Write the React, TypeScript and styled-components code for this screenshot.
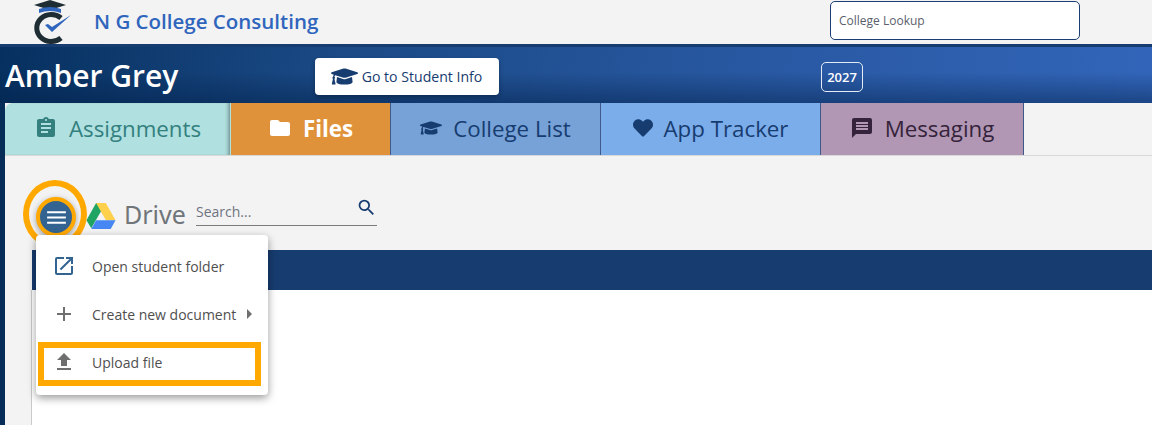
import * as React from 'react';
import styled, { createGlobalStyle } from 'styled-components';
import { FaGraduationCap, FaHeart } from 'react-icons/fa';
import {
  MdAdd,
  MdArrowRight,
  MdAssignment,
  MdFileUpload,
  MdFolder,
  MdMenu,
  MdMessage,
  MdOpenInNew,
  MdSearch,
} from 'react-icons/md';

const GlobalStyle = createGlobalStyle`
  html, body {
    margin: 0;
    padding: 0;
    height: 100%;
    overflow: hidden;
    background: #f3f3f3;
    font-family: "Open Sans", "Liberation Sans", sans-serif;
  }
  * { box-sizing: border-box; }
`;

const Page = styled.div`
  width: 1152px;
  height: 425px;
  display: flex;
  flex-direction: column;
  overflow: hidden;
`;

const TopBar = styled.div`
  height: 44px;
  flex: none;
  display: flex;
  align-items: flex-start;
  padding-left: 31px;
  background: #f3f3f3;
`;

const Brand = styled.div`
  margin: 8px 0 0 21px;
  width: 736px;
  font-size: 20.5px;
  line-height: 27px;
  font-weight: 600;
  color: #2f65bd;
`;

const Lookup = styled.div`
  width: 250px;
  height: 39px;
  margin-top: 1px;
  padding-left: 8px;
  display: flex;
  align-items: center;
  font-size: 12px;
  color: #5a5f6b;
  background: #fff;
  border: 1px solid #1b3d72;
  border-radius: 5px;
`;

const Header = styled.div`
  height: 59px;
  flex: none;
  display: flex;
  align-items: flex-start;
  padding-left: 5px;
  border-top: 3px solid #173c70;
  background: linear-gradient(to bottom, rgba(0, 30, 70, 0) 45%, rgba(0, 30, 70, 0.45) 100%),
    linear-gradient(100deg, #06305f 0%, #1b4a86 30%, #2a5aa5 70%, #3265b9 100%);
`;

const StudentName = styled.h1`
  margin: 9px 0 0;
  width: 310px;
  font-size: 30px;
  line-height: 40px;
  font-weight: 600;
  color: #fff;
`;

const InfoButton = styled.div`
  width: 184px;
  height: 37px;
  margin-top: 11px;
  display: flex;
  align-items: center;
  justify-content: center;
  gap: 4px;
  font-size: 14.1px;
  color: #173c70;
  background: #fff;
  border-radius: 4px;
  box-shadow: 0 2px 4px rgba(0, 0, 0, 0.3);
  svg { font-size: 27px; margin-left: -1px; }
`;

const YearBadge = styled.div`
  width: 42px;
  height: 30px;
  margin: 15px 0 0 322px;
  display: flex;
  align-items: center;
  justify-content: center;
  font-size: 13px;
  font-weight: 600;
  color: #fff;
  border: 1px solid #e4ebf5;
  border-radius: 5px;
`;

const Body = styled.div`
  flex: 1;
  display: flex;
  min-height: 0;
`;

const Rail = styled.div`
  width: 5px;
  flex: none;
  background: #052d58;
`;

const Content = styled.div`
  flex: 1;
  min-width: 0;
  display: flex;
  flex-direction: column;
`;

const Tabs = styled.div`
  height: 53px;
  flex: none;
  display: flex;
  border-bottom: 1px solid #d8d8d8;
  background: #f3f3f3;
`;

const Tab = styled.div<{ $w: number; $bg: string; $fg: string; $icon?: number; $first?: boolean; $bold?: boolean }>`
  width: ${p => p.$w}px;
  height: 52px;
  display: flex;
  align-items: center;
  justify-content: center;
  gap: 11px;
  padding-bottom: 2px;
  background: ${p => p.$bg};
  color: ${p => p.$fg};
  font-size: 22.3px;
  font-weight: ${p => (p.$bold ? 700 : 400)};
  border-right: 1px solid ${p => (p.$first ? 'transparent' : '#3f5a8a')};
  border-top-left-radius: ${p => (p.$first ? '8px' : '0')};
  box-shadow: ${p => (p.$first ? 'inset -4px 0 4px -3px rgba(0, 0, 0, 0.45)' : 'none')};
  svg { font-size: ${p => p.$icon ?? 24}px; flex: none; }
`;

const Panel = styled.div`
  flex: 1;
  min-height: 0;
  display: flex;
  flex-direction: column;
  position: relative;
`;

const Toolbar = styled.div`
  height: 94px;
  flex: none;
  display: flex;
  align-items: flex-start;
  padding: 44px 0 0 31px;
`;

const MenuButton = styled.div`
  position: relative;
  width: 40px;
  height: 40px;
  flex: none;
  margin-top: -3px;
  display: flex;
  align-items: center;
  justify-content: center;
  color: #fff;
  background: #336491;
  border: 4px solid #ffa800;
  border-radius: 50%;
  box-shadow: 0 2px 6px rgba(0, 0, 0, 0.35);
  svg { font-size: 25px; }
`;

const Ring = styled.div`
  position: absolute;
  left: -17px;
  top: -21px;
  width: 64px;
  height: 68px;
  border: 6px solid #ffa800;
  border-radius: 50%;
`;

const DriveMark = styled.svg`
  width: 30px;
  height: 26px;
  flex: none;
  margin: 3px 0 0 10px;
`;

const DriveWord = styled.div`
  margin: -3px 0 0 8px;
  width: 72px;
  font-family: "Noto Sans", "Open Sans", sans-serif;
  font-size: 25px;
  line-height: 34px;
  color: #70757a;
`;

const SearchBox = styled.div`
  width: 181px;
  height: 29px;
  margin-top: -3px;
  display: flex;
  align-items: center;
  justify-content: space-between;
  font-size: 14px;
  color: #6f7480;
  border-bottom: 1px solid #7b7b7b;
  span { margin-top: 1px; }
  svg { font-size: 21px; color: #173c70; margin-top: -8px; }
`;

const BlueBar = styled.div`
  height: 40px;
  flex: none;
  margin-left: 27px;
  background: #173c70;
`;

const Sheet = styled.div`
  flex: 1;
  margin-left: 26px;
  background: #fff;
  border-left: 1px solid #c9c9c9;
`;

const Menu = styled.div`
  position: absolute;
  left: 31px;
  top: 79px;
  width: 232px;
  height: 160px;
  padding-top: 7px;
  background: #fff;
  border-radius: 4px;
  box-shadow: 0 3px 8px rgba(0, 0, 0, 0.4);
`;

const MenuItem = styled.div`
  position: relative;
  height: 48px;
  display: flex;
  align-items: center;
  padding-left: 16px;
  font-size: 14px;
  color: #4f4f4f;
`;

const ItemIcon = styled.div<{ $blue?: boolean }>`
  width: 24px;
  height: 24px;
  margin-right: 16px;
  display: flex;
  align-items: center;
  justify-content: center;
  color: ${p => (p.$blue ? '#336491' : '#6f6f6f')};
  svg { font-size: 26px; }
`;

const Caret = styled.div`
  margin-left: 1px;
  display: flex;
  color: #6f6f6f;
  svg { font-size: 24px; }
`;

const Highlight = styled.div`
  position: absolute;
  left: 2px;
  top: 4px;
  width: 223px;
  height: 44px;
  border: 6px solid #ffa800;
`;

function CollegeLogo() {
  return (
    <svg width="42" height="44" viewBox="0 0 42 44">
      <path d="M19 0 L35 5 L19 10 L3 5 Z" fill="#1e2c33" />
      <path d="M8 9 Q19 5 30 9 L30 13 Q19 9 8 13 Z" fill="#2f65bd" />
      <path d="M30 18 A14.5 13.5 0 1 0 30 38" fill="none" stroke="#1e2c33" strokeWidth="5" />
      <path d="M14 25 L21 32 L40 15 L21 27 L17 24 Z" fill="#2f65bd" />
    </svg>
  );
}

export default function App() {
  return (
    <>
      <GlobalStyle />
      <Page>
        <TopBar>
          <CollegeLogo />
          <Brand>N G College Consulting</Brand>
          <Lookup>College Lookup</Lookup>
        </TopBar>
        <Header>
          <StudentName>Amber Grey</StudentName>
          <InfoButton>
            <FaGraduationCap />
            Go to Student Info
          </InfoButton>
          <YearBadge>2027</YearBadge>
        </Header>
        <Body>
          <Rail />
          <Content>
            <Tabs>
              <Tab $w={226} $bg="#b0e0df" $fg="#33807f" $first>
                <MdAssignment />
                Assignments
              </Tab>
              <Tab $w={160} $bg="#df923a" $fg="#fff" $bold>
                <MdFolder />
                Files
              </Tab>
              <Tab $w={210} $bg="#76a2d8" $fg="#173c70" $icon={22}>
                <FaGraduationCap />
                College List
              </Tab>
              <Tab $w={220} $bg="#7badea" $fg="#173c70" $icon={20}>
                <FaHeart />
                App Tracker
              </Tab>
              <Tab $w={203} $bg="#b197b3" $fg="#35233b">
                <MdMessage />
                Messaging
              </Tab>
            </Tabs>
            <Panel>
              <Toolbar>
                <MenuButton>
                  <Ring />
                  <MdMenu />
                </MenuButton>
                <DriveMark viewBox="0 0 87.3 78">
                  <path d="M29 0 L58 0 L29 50 L14.5 76 L0 52 Z" fill="#1fa463" />
                  <path d="M29 0 L58 0 L87.3 52 L58.3 52 Z" fill="#ffd04b" />
                  <path d="M29 52 L87.3 52 L72.8 78 L14.5 78 Z" fill="#4687f4" />
                </DriveMark>
                <DriveWord>Drive</DriveWord>
                <SearchBox>
                  <span>Search...</span>
                  <MdSearch />
                </SearchBox>
              </Toolbar>
              <BlueBar />
              <Sheet />
              <Menu>
                <MenuItem>
                  <ItemIcon $blue>
                    <MdOpenInNew />
                  </ItemIcon>
                  Open student folder
                </MenuItem>
                <MenuItem>
                  <ItemIcon>
                    <MdAdd />
                  </ItemIcon>
                  Create new document
                  <Caret>
                    <MdArrowRight />
                  </Caret>
                </MenuItem>
                <MenuItem>
                  <ItemIcon>
                    <MdFileUpload />
                  </ItemIcon>
                  Upload file
                  <Highlight />
                </MenuItem>
              </Menu>
            </Panel>
          </Content>
        </Body>
      </Page>
    </>
  );
}
